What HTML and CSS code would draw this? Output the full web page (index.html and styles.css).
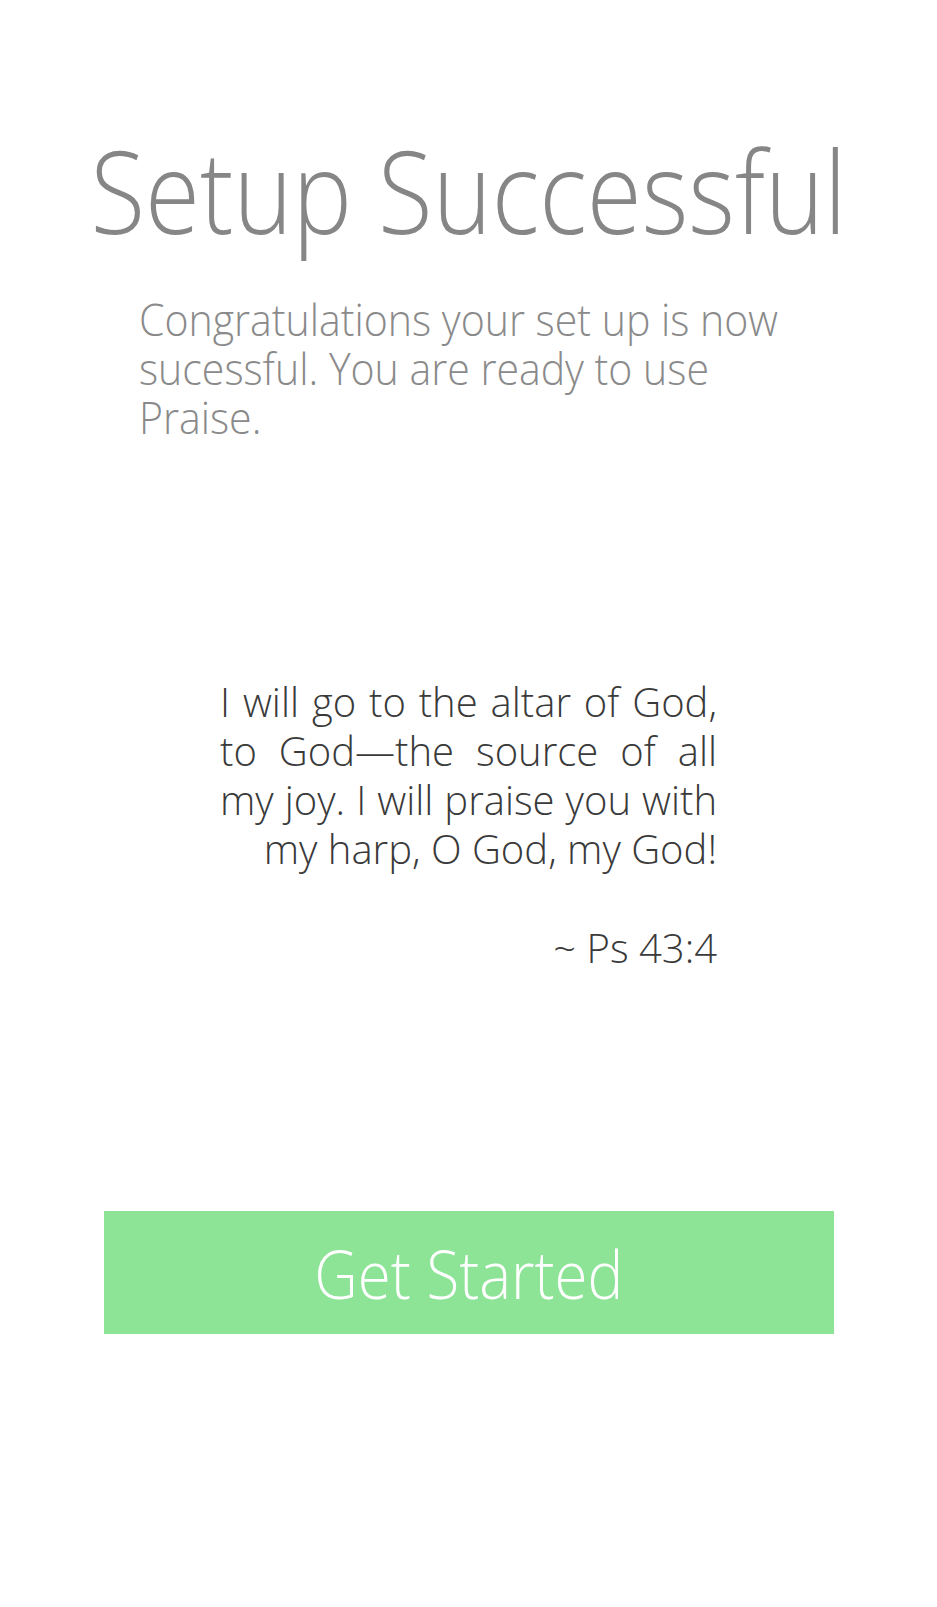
FILE: index.html
```html
<!DOCTYPE html>
<html>
<head>
<meta charset="utf-8">
<link rel="stylesheet" href="styles.css">
</head>
<body>
<main class="screen">
  <h1 class="title">Setup Successful</h1>
  <p class="intro">Congratulations your set up is now sucessful. You are ready to use Praise.</p>
  <section class="verse">
    <p class="verse-text">I will go to the altar of God, to God—the source of all my joy. I will praise you with my harp, O God, my God!</p>
    <p class="verse-ref">~ Ps 43:4</p>
  </section>
  <button class="start-btn" type="button"><span class="start-label">Get Started</span></button>
</main>
</body>
</html>
```
FILE: styles.css
```css
html, body {
  margin: 0;
  padding: 0;
  background: #ffffff;
}
body {
  font-family: "Open Sans", "Liberation Sans", sans-serif;
  font-weight: 300;
}
.screen {
  width: 937px;
  min-height: 1607px;
  display: flex;
  flex-direction: column;
  align-items: center;
  padding-top: 132px;
  box-sizing: border-box;
}
.title {
  margin: 0;
  font-size: 115px;
  line-height: 1;
  font-weight: 300;
  color: #868686;
  text-align: center;
  white-space: nowrap;
  transform: scaleX(0.87);
  transform-origin: center;
}
.intro {
  margin: 47px 0 0;
  align-self: flex-start;
  margin-left: 139px;
  width: 720px;
  font-size: 45px;
  line-height: 49px;
  color: #8a8a8a;
  transform: scaleX(0.912);
  transform-origin: left center;
}
.verse {
  margin-top: 236px;
  width: 497px;
}
.verse-text {
  margin: 0;
  font-size: 40px;
  line-height: 49px;
  color: #3a3a3a;
  text-align: justify;
  text-align-last: right;
}
.verse-ref {
  margin: 50px 0 0;
  font-size: 40px;
  line-height: 49px;
  color: #3a3a3a;
  text-align: right;
}
.start-btn {
  margin-top: 239px;
  width: 730px;
  height: 123px;
  border: none;
  background: #8de396;
  color: #ffffff;
  font-family: inherit;
  font-weight: 300;
  font-size: 66px;
  padding: 0;
}
.start-label {
  display: inline-block;
  transform: scaleX(0.91);
}
```
